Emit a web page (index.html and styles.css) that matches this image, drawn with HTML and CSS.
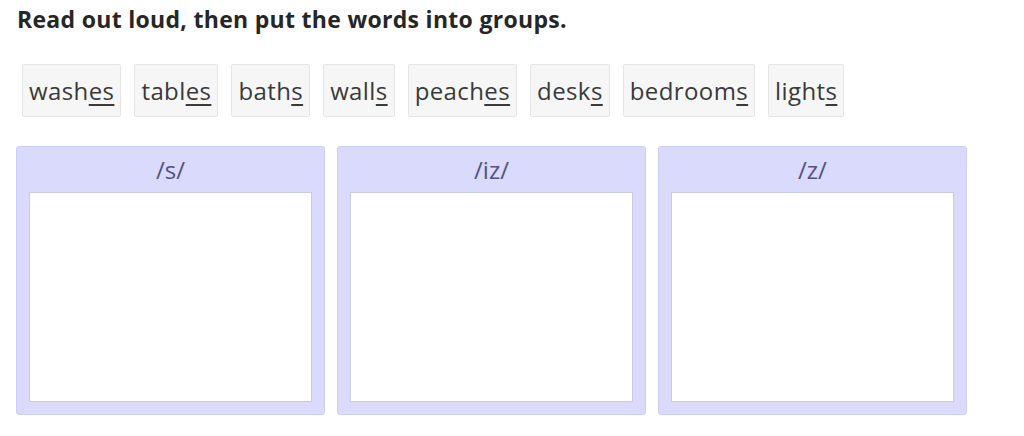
FILE: index.html
```html
<!doctype html>
<html lang="en">
  <head>
    <meta charset="UTF-8" />
    <meta name="viewport" content="width=device-width, initial-scale=1.0" />
    <title>Word groups</title>
    <link rel="stylesheet" href="styles.css">
  </head>
  <body>
    <h1 class="task">Read out loud, then put the words into groups.</h1>

    <div class="words">
      <span class="word">wash<u>es</u></span>
      <span class="word">tabl<u>es</u></span>
      <span class="word">bath<u>s</u></span>
      <span class="word">wall<u>s</u></span>
      <span class="word">peach<u>es</u></span>
      <span class="word">desk<u>s</u></span>
      <span class="word">bedroom<u>s</u></span>
      <span class="word">light<u>s</u></span>
    </div>

    <div class="groups">
      <div class="group">
        <div class="group-title">/s/</div>
        <div class="drop"></div>
      </div>
      <div class="group">
        <div class="group-title">/iz/</div>
        <div class="drop"></div>
      </div>
      <div class="group">
        <div class="group-title">/z/</div>
        <div class="drop"></div>
      </div>
    </div>
  </body>
</html>
```

FILE: styles.css
```css
body {
  margin: 0;
  padding: 0 16px;
  font-family: "Open Sans", Lato, sans-serif;
  color: #2b2b2b;
  background: #fff;
}

.task {
  margin: 0;
  padding: 5px 0 0 1px;
  font-size: 23px;
  font-weight: 700;
  letter-spacing: 0.3px;
  line-height: 28px;
  color: #262626;
}

.words {
  display: flex;
  gap: 13px;
  margin-top: 31px;
  padding-left: 6px;
}

.word {
  display: flex;
  align-items: center;
  height: 51px;
  padding: 0 6px;
  border: 1px solid #e6e6e6;
  border-radius: 2px;
  background-color: #f6f6f6;
  font-size: 24px;
  letter-spacing: 0.4px;
  color: #3a3a3a;
}

.word u {
  text-decoration-thickness: 2px;
  text-underline-offset: 4px;
}

.groups {
  display: flex;
  gap: 12px;
  margin-top: 29px;
}

.group {
  display: flex;
  flex-direction: column;
  width: 309px;
  height: 269px;
  box-sizing: border-box;
  padding: 0 12px 12px;
  border: 1px solid #cdcef3;
  border-radius: 3px;
  background-color: #d9dafc;
}

.group-title {
  height: 45px;
  line-height: 45px;
  text-align: center;
  font-size: 24px;
  color: #50527f;
}

.drop {
  flex: 1;
  border: 1px solid #c9cae6;
  background-color: #fff;
}
```
